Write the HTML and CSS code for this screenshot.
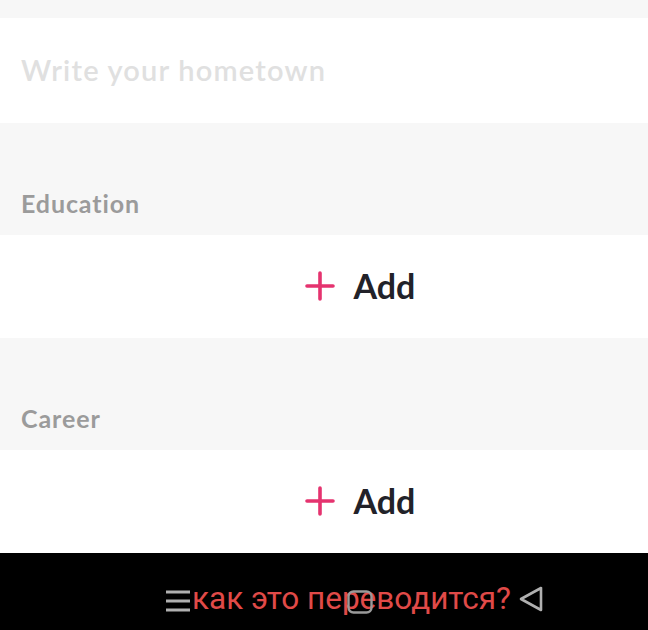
FILE: index.html
```html
<!DOCTYPE html>
<html>
<head>
<meta charset="utf-8">
<link rel="stylesheet" href="styles.css">
</head>
<body>
<div class="screen">
  <div class="band-top"></div>
  <div class="field"><span class="placeholder">Write your hometown</span></div>
  <div class="section-label"><span>Education</span></div>
  <div class="add-row">
    <svg class="plus" width="30" height="30" viewBox="0 0 30 30"><path d="M15 2 V28 M2 15 H28" stroke="#e5336f" stroke-width="3.6" stroke-linecap="round"/></svg>
    <span class="add-text">Add</span>
  </div>
  <div class="section-label"><span>Career</span></div>
  <div class="add-row">
    <svg class="plus" width="30" height="30" viewBox="0 0 30 30"><path d="M15 2 V28 M2 15 H28" stroke="#e5336f" stroke-width="3.6" stroke-linecap="round"/></svg>
    <span class="add-text">Add</span>
  </div>
  <div class="navbar">
    <svg class="nav-menu" width="26" height="24" viewBox="0 0 26 24"><path d="M1 3 H25 M1 12 H25 M1 21 H25" stroke="#b0b0b0" stroke-width="2.8"/></svg>
    <span class="nav-text">как это переводится?</span>
    <svg class="nav-back" width="28" height="28" viewBox="0 0 28 28"><path d="M24 3 L24 25 L4 14 Z" fill="none" stroke="#b0b0b0" stroke-width="2.6" stroke-linejoin="round"/></svg>
    <svg class="nav-home" width="26" height="24" viewBox="0 0 26 24"><rect x="1.5" y="1.5" width="23" height="21" rx="5" fill="none" stroke="#9a9a9a" stroke-width="2.4"/></svg>
  </div>
</div>
</body>
</html>
```
FILE: styles.css
```css
html, body {
  margin: 0;
  padding: 0;
}
body {
  font-family: Lato, "Noto Sans", sans-serif;
  background: #f7f7f7;
}
.screen {
  width: 648px;
  height: 630px;
  display: flex;
  flex-direction: column;
  overflow: hidden;
}
.band-top {
  height: 18px;
  background: #f7f7f7;
}
.field {
  height: 105px;
  background: #ffffff;
  display: flex;
  align-items: center;
  padding-left: 21px;
  box-sizing: border-box;
  padding-bottom: 2px;
}
.placeholder {
  font-size: 29px;
  font-weight: 600;
  letter-spacing: 1.2px;
  color: #e0e0e0;
}
.section-label {
  height: 112px;
  background: #f7f7f7;
  display: flex;
  align-items: flex-end;
  padding-left: 21px;
  padding-bottom: 17px;
  box-sizing: border-box;
}
.section-label span {
  font-size: 25px;
  font-weight: 700;
  letter-spacing: 0.9px;
  color: #9b9b9b;
}
.add-row {
  height: 103px;
  background: #ffffff;
  display: flex;
  align-items: center;
  justify-content: center;
  padding-left: 72px;
  gap: 19px;
  box-sizing: border-box;
  padding-bottom: 2px;
}
.plus {
  display: block;
}
.add-text {
  font-size: 34px;
  font-weight: 700;
  color: #222229;
}
.navbar {
  position: relative;
  flex: 1;
  background: #000000;
  display: flex;
  align-items: center;
  padding-left: 165px;
  padding-top: 13px;
  box-sizing: border-box;
}
.nav-menu {
  display: block;
  margin-right: 1px;
  margin-top: 6px;
}
.nav-text {
  font-family: Roboto, "Noto Sans", sans-serif;
  font-size: 31.5px;
  color: #e04a48;
}
.nav-back {
  display: block;
  margin-left: 6px;
  margin-top: 2px;
}
.nav-home {
  position: absolute;
  left: 347px;
  top: 37px;
}
```
